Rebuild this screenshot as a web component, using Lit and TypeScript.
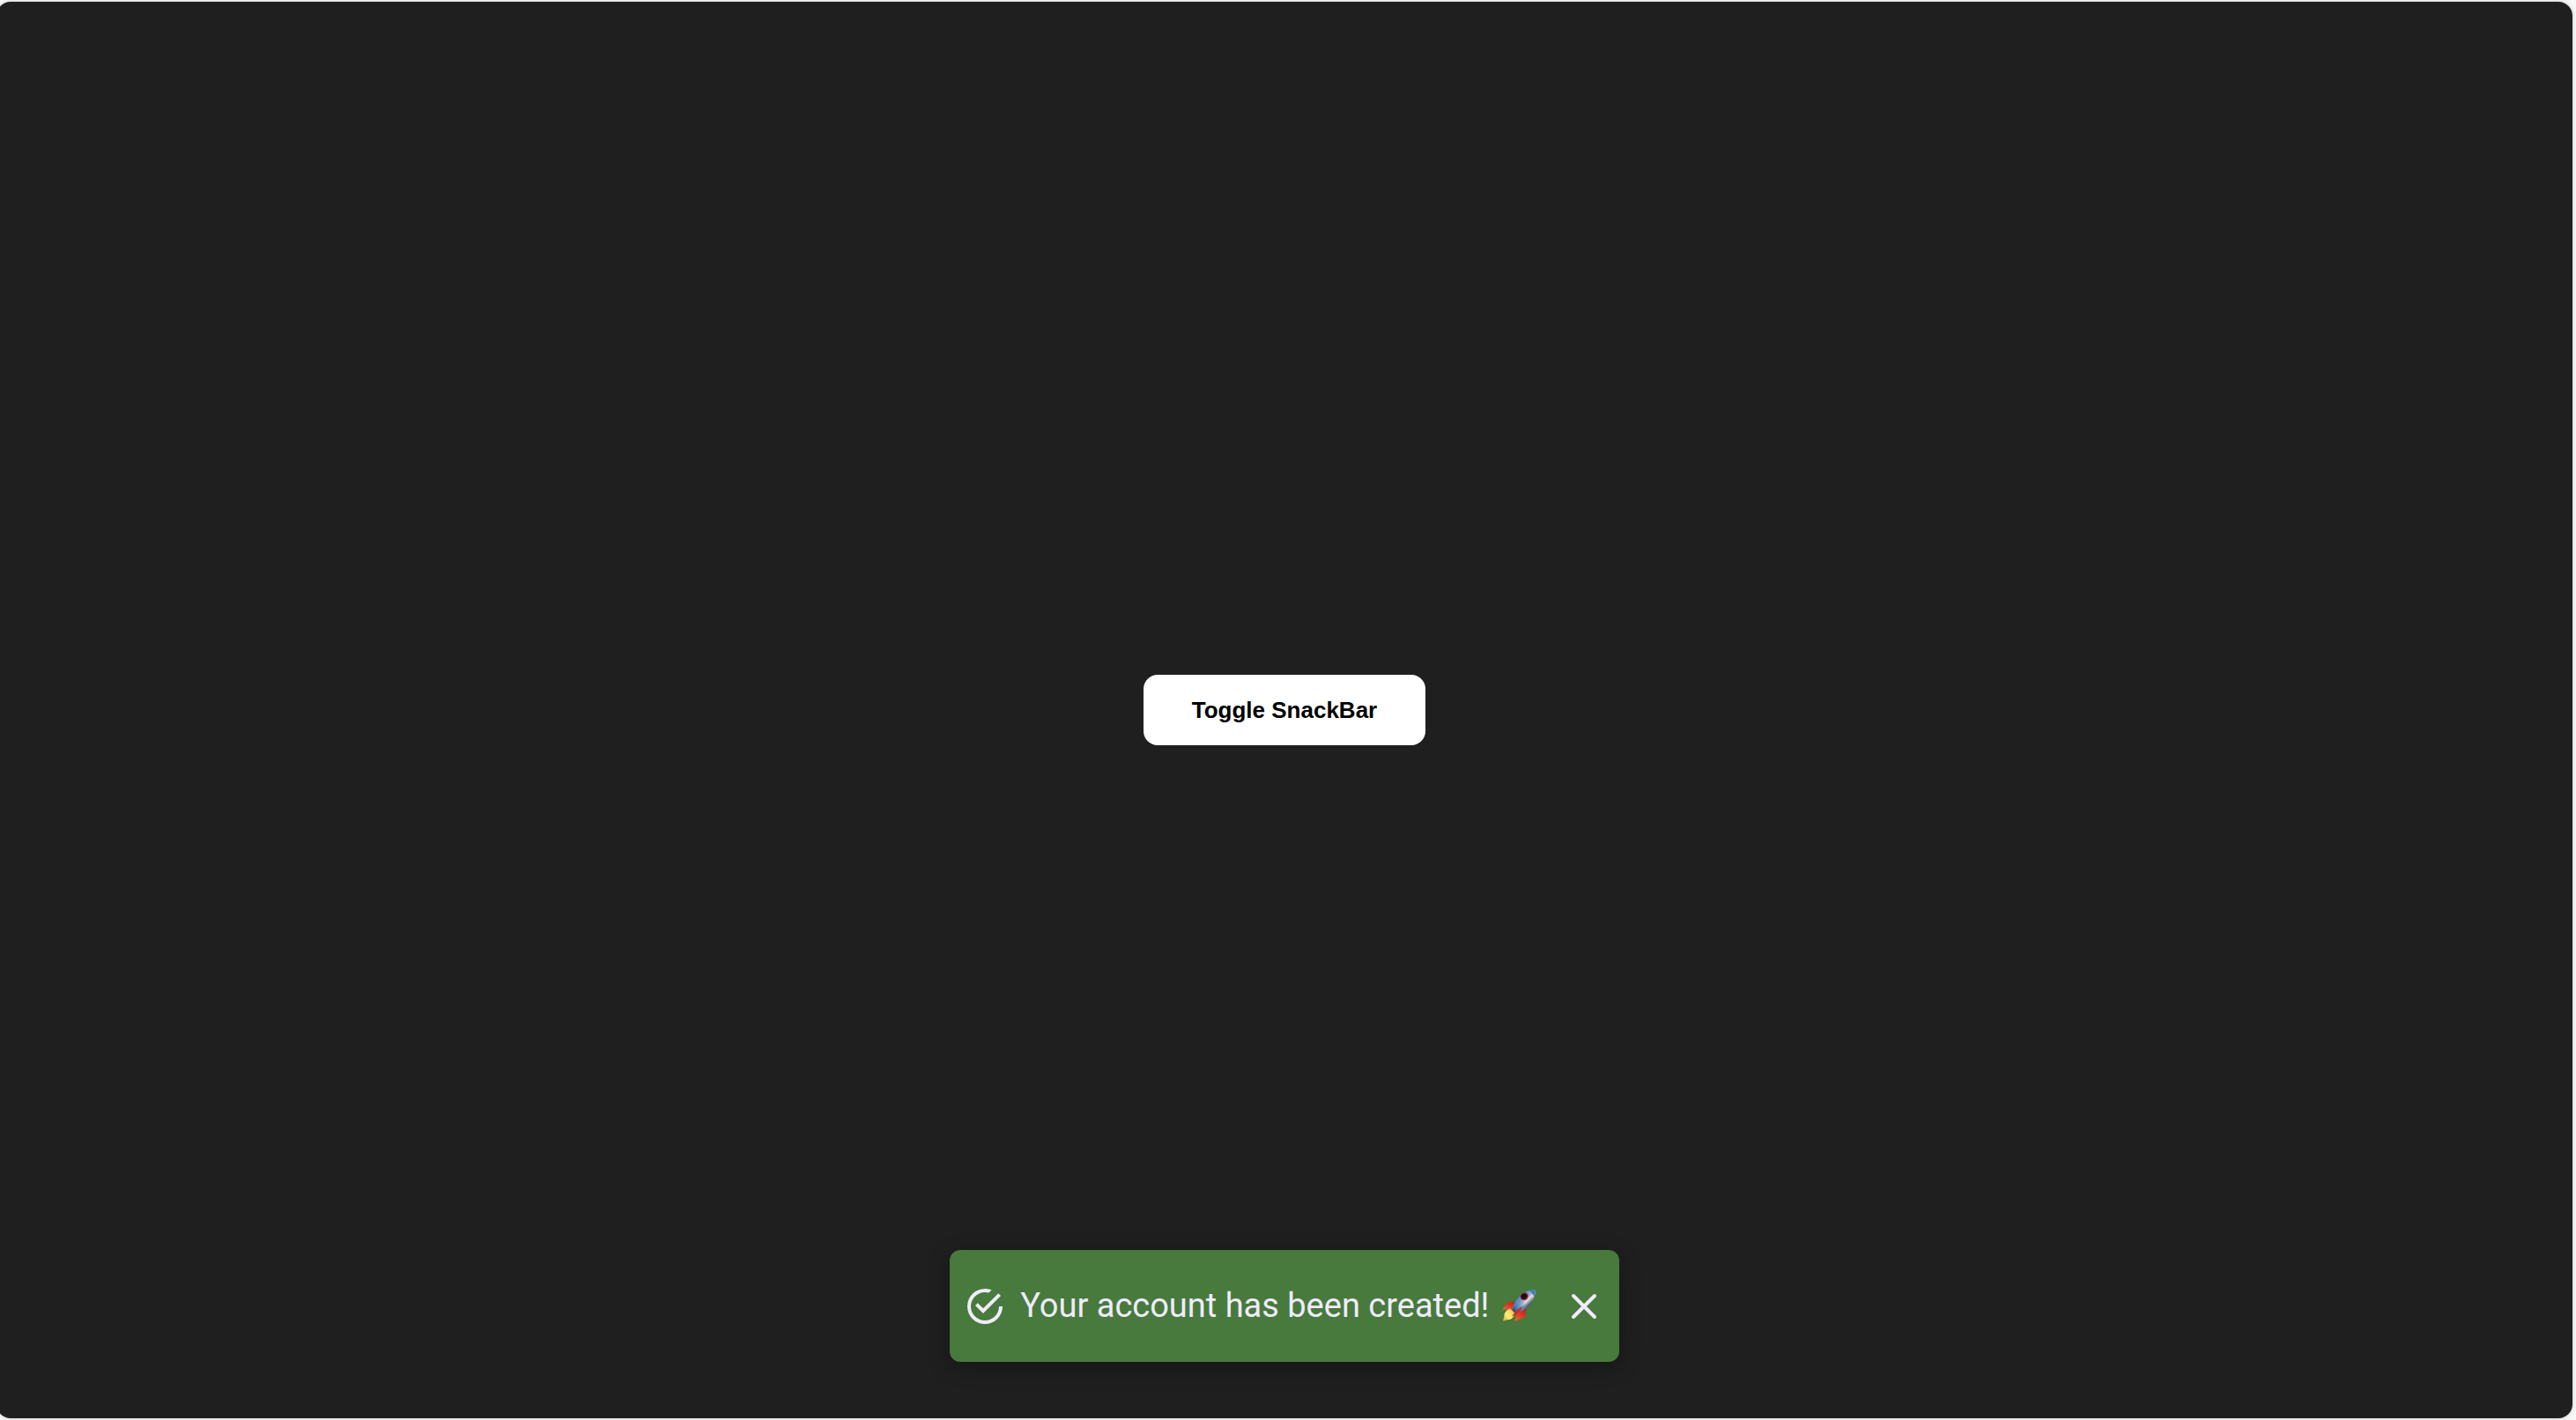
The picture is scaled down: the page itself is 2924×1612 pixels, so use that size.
import { LitElement, html, css, svg } from "lit";
import { customElement, state } from "lit/decorators.js";

const successIcon = svg`<path fill="currentColor" d="M20,12A8,8 0 0,1 12,20A8,8 0 0,1 4,12A8,8 0 0,1 12,4C12.76,4 13.5,4.11 14.2,4.31L15.77,2.74C14.61,2.26 13.34,2 12,2A10,10 0 0,0 2,12A10,10 0 0,0 12,22A10,10 0 0,0 22,12M7.91,10.08L6.5,11.5L11,16L21,6L19.59,4.58L11,13.17L7.91,10.08Z"/>`;

const rocketIcon = svg`
  <defs>
    <linearGradient id="hull" gradientUnits="userSpaceOnUse" x1="19" y1="8" x2="30" y2="19.500">
      <stop offset="0" stop-color="#3f5f88"/>
      <stop offset=".2" stop-color="#5f8fc4"/>
      <stop offset=".5" stop-color="#8fb0cf"/>
      <stop offset=".7" stop-color="#dcdedd"/>
      <stop offset=".88" stop-color="#8f969d"/>
      <stop offset="1" stop-color="#515b66"/>
    </linearGradient>
    <linearGradient id="tail" gradientUnits="userSpaceOnUse" x1="26" y1="14" x2="15" y2="26">
      <stop offset="0" stop-color="#4a80c0" stop-opacity="0"/>
      <stop offset=".5" stop-color="#4a80c0" stop-opacity=".7"/>
      <stop offset="1" stop-color="#2c4a74"/>
    </linearGradient>
    <linearGradient id="fin" x1="0" y1="1" x2="1" y2="0">
      <stop offset="0" stop-color="#f26a35"/>
      <stop offset=".5" stop-color="#e03a20"/>
      <stop offset="1" stop-color="#b5221a"/>
    </linearGradient>
    <linearGradient id="flame" x1="0" y1="1" x2="1" y2="0">
      <stop offset="0" stop-color="#d9962e"/>
      <stop offset=".4" stop-color="#fff07a"/>
      <stop offset=".7" stop-color="#fbd65a"/>
      <stop offset="1" stop-color="#ee8a2c"/>
    </linearGradient>
  </defs>
  <path fill="url(#fin)" d="M17 15 8 14.500 1.200 23.500 12 24Z"/>
  <path fill="url(#fin)" d="M28.500 22 27 32 15 37 18.500 26.500Z"/>
  <path fill="url(#flame)" d="M10 22.500C5.500 24.500 3 28 3.500 31L1.800 36.800 8 35C11 35.500 14.500 32.500 16 28Z"/>
  <path fill="url(#hull)" d="M39 1C31 1.200 24.500 4 20 9 16.500 13 13.500 18.500 12.500 24L15.500 27.500C21.500 26.500 27.500 24 32 19 36 14.500 38.800 8 39 1Z"/>
  <path fill="url(#tail)" d="M26 5.500 32 19C27.500 24 21.500 26.500 15.500 27.500L12.500 24C13.500 18.500 16.500 13 20 9Z"/>
  <path fill="#4a7db5" d="M39 1C36.500 1 34.300 1.400 32.300 2L37.400 8.600C38.400 6.300 38.900 3.700 39 1Z"/>
  <path fill="#d6291f" d="M24 20C20 22 15 26 12 31.500 17.500 29.500 22 26 24 20Z"/>
  <ellipse cx="26.200" cy="8.700" rx="4.800" ry="4.200" transform="rotate(-35 26.200 8.700)" fill="#b8242c"/>
  <ellipse cx="26" cy="8.600" rx="3.600" ry="3.100" transform="rotate(-35 26 8.600)" fill="#12121a"/>`;

@customElement("snack-bar")
export class SnackBar extends LitElement {
  static styles = css`
    :host {
      display: block;
    }
    .bar {
      display: flex;
      align-items: center;
      gap: 16px;
      padding: 32px 16px;
      border-radius: 12px;
      background: #477a3c;
      color: #f0ebfc;
      box-shadow: 0 6px 24px rgba(0, 0, 0, 0.3);
      font-family: Roboto, sans-serif;
      font-size: 38px;
      line-height: 63px;
    }
    .icon {
      flex: none;
      width: 48px;
      height: 48px;
    }
    .message {
      margin: 0;
      white-space: nowrap;
    }
    .rocket {
      width: 48px;
      height: 40px;
      vertical-align: -8px;
    }
    .close {
      display: flex;
      padding: 8px;
      margin-left: 10px;
      border: 0;
      background: none;
      color: inherit;
      cursor: pointer;
    }
    .cross {
      width: 32px;
      height: 32px;
    }
  `;

  private close() {
    this.dispatchEvent(new CustomEvent("close"));
  }

  render() {
    return html`
      <div class="bar" role="status">
        <svg class="icon" viewBox="0 0 24 24" aria-hidden="true">${successIcon}</svg>
        <p class="message">
          Your account has been created!
          <svg class="rocket" viewBox="0 0 40 40" role="img" aria-label="rocket">${rocketIcon}</svg>
        </p>
        <button class="close" type="button" aria-label="Close" @click=${this.close}>
          <svg class="cross" viewBox="0 0 32 32" aria-hidden="true">
            <path d="M4 4 28 28M28 4 4 28" fill="none" stroke="currentColor" stroke-width="4" stroke-linecap="round"/>
          </svg>
        </button>
      </div>
    `;
  }
}

@customElement("app-root")
export class AppRoot extends LitElement {
  static styles = css`
    :host {
      display: flex;
      box-sizing: border-box;
      min-height: 100vh;
      padding: 2px 4px 2px 0;
      background: #f6f6f6;
    }
    .stage {
      position: relative;
      display: flex;
      flex: 1;
      align-items: center;
      justify-content: center;
      margin-left: -4px;
      border-radius: 16px;
      background: #1f1f1f;
      box-shadow: 0 0 4px rgba(0, 0, 0, 0.2);
    }
    .toggle {
      padding: 24px 55px;
      border: 0;
      border-radius: 16px;
      background: #fff;
      color: #000;
      font-family: "Liberation Sans", Arial, sans-serif;
      font-size: 26px;
      font-weight: 700;
      line-height: 32px;
      cursor: pointer;
    }
    .overlay {
      position: absolute;
      right: 0;
      bottom: 64px;
      left: 0;
      display: flex;
      justify-content: center;
    }
  `;

  @state() private open = true;

  render() {
    return html`
      <main class="stage">
        <button class="toggle" type="button" @click=${() => (this.open = !this.open)}>Toggle SnackBar</button>
        ${this.open
          ? html`<div class="overlay"><snack-bar @close=${() => (this.open = false)}></snack-bar></div>`
          : null}
      </main>
    `;
  }
}
